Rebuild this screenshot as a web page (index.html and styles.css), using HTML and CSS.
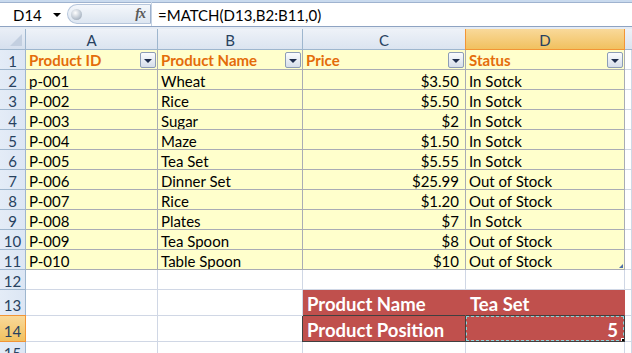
FILE: index.html
```html
<!DOCTYPE html>
<html>
<head>
<meta charset="utf-8">
<link rel="stylesheet" href="styles.css">
</head>
<body>
<div class="app">
  <div class="fbar">
    <div class="namebox"><span class="nb-text">D14</span><span class="nb-arrow"></span></div>
    <div class="slider"><span class="knob"></span><span class="fx">fx</span></div>
    <div class="formula">=MATCH(D13,B2:B11,0)</div>
  </div>
  <div class="gap"></div>
  <div class="sheet">
    <!-- header row -->
    <div class="corner"><span class="corner-tri"></span></div>
    <div class="ch">A</div><div class="ch">B</div><div class="ch">C</div><div class="ch ch-sel">D</div><div class="ch ch-e"></div>

    <div class="rh">1</div>
    <div class="c t th"><span>Product ID</span><span class="flt"></span></div>
    <div class="c t th"><span>Product Name</span><span class="flt"></span></div>
    <div class="c t th"><span>Price</span><span class="flt"></span></div>
    <div class="c t th"><span>Status</span><span class="flt"></span></div>
    <div class="c e"></div>

    <div class="rh">2</div><div class="c t">p-001</div><div class="c t">Wheat</div><div class="c t n">$3.50</div><div class="c t">In Sotck</div><div class="c e"></div>
    <div class="rh">3</div><div class="c t">P-002</div><div class="c t">Rice</div><div class="c t n">$5.50</div><div class="c t">In Sotck</div><div class="c e"></div>
    <div class="rh">4</div><div class="c t">P-003</div><div class="c t">Sugar</div><div class="c t n">$2</div><div class="c t">In Sotck</div><div class="c e"></div>
    <div class="rh">5</div><div class="c t">P-004</div><div class="c t">Maze</div><div class="c t n">$1.50</div><div class="c t">In Sotck</div><div class="c e"></div>
    <div class="rh">6</div><div class="c t">P-005</div><div class="c t">Tea Set</div><div class="c t n">$5.55</div><div class="c t">In Sotck</div><div class="c e"></div>
    <div class="rh">7</div><div class="c t">P-006</div><div class="c t">Dinner Set</div><div class="c t n">$25.99</div><div class="c t">Out of Stock</div><div class="c e"></div>
    <div class="rh">8</div><div class="c t">P-007</div><div class="c t">Rice</div><div class="c t n">$1.20</div><div class="c t">Out of Stock</div><div class="c e"></div>
    <div class="rh">9</div><div class="c t">P-008</div><div class="c t">Plates</div><div class="c t n">$7</div><div class="c t">In Sotck</div><div class="c e"></div>
    <div class="rh">10</div><div class="c t">P-009</div><div class="c t">Tea Spoon</div><div class="c t n">$8</div><div class="c t">Out of Stock</div><div class="c e"></div>
    <div class="rh">11</div><div class="c t">P-010</div><div class="c t">Table Spoon</div><div class="c t n">$10</div><div class="c t last">Out of Stock<span class="resize"></span></div><div class="c e"></div>

    <div class="rh">12</div><div class="c e"></div><div class="c e"></div><div class="c e"></div><div class="c e"></div><div class="c e"></div>

    <div class="rh tall">13</div><div class="c e tall"></div><div class="c e tall"></div>
    <div class="c red tall r13c">Product Name</div><div class="c red tall r13d">Tea Set</div><div class="c e tall"></div>

    <div class="rh tall rh-sel">14</div><div class="c e tall"></div><div class="c e tall"></div>
    <div class="c red tall r14c">Product Position</div><div class="c red tall r14d n"><span class="marq"></span>5<span class="handle"></span></div><div class="c e tall"></div>

    <div class="rh">15</div><div class="c e"></div><div class="c e"></div><div class="c e"></div><div class="c e"></div><div class="c e"></div>
  </div>
</div>
</body>
</html>
```

FILE: styles.css
```css
* { box-sizing: border-box; }
html, body { margin: 0; padding: 0; }
body {
  width: 632px;
  height: 353px;
  overflow: hidden;
  background: #ffffff;
  font-family: Lato, "Open Sans", sans-serif;
  font-size: 15px;
  color: #000;
}
.app { display: flex; flex-direction: column; }

/* formula bar */
.fbar {
  display: flex;
  height: 27px;
  border-top: 2px solid #c9daee;
  border-bottom: 1px solid #8ea3c2;
  background: #fff;
  box-shadow: inset 0 1px 0 #9fb3cf;
}
.namebox {
  width: 66px;
  display: flex;
  align-items: center;
  justify-content: space-between;
  padding: 2px 5px 0 13px;
}
.nb-text { font-family: Lato, sans-serif; font-size: 15px; color: #000; }
.nb-arrow {
  width: 0; height: 0;
  border-left: 4px solid transparent;
  border-right: 4px solid transparent;
  border-top: 4px solid #000;
}
.slider {
  width: 84px;
  margin: 2px 0 2px 1px;
  border-radius: 11px 0 0 11px;
  background: linear-gradient(#f4f7fb, #dde6f1);
  border: 1px solid #b6c6dc;
  border-right: 1px solid #9db1cd;
  display: flex;
  align-items: center;
  justify-content: space-between;
  padding: 0 3px 0 3px;
}
.knob {
  width: 11px; height: 11px;
  border-radius: 50%;
  background: radial-gradient(circle at 40% 35%, #ffffff, #b9c3cf 60%, #8f9aa8);
}
.fx {
  font-family: "Liberation Serif", serif;
  font-style: italic;
  font-weight: bold;
  font-size: 14px;
  color: #5a5a5a;
  letter-spacing: -1px;
  padding-right: 2px;
}
.formula {
  flex: 1;
  display: flex;
  align-items: center;
  padding: 2px 0 0 6px;
  font-size: 15px;
  border-left: 1px solid #c5d2e3;
}
.gap { height: 2px; background: #e6ecf4; }

/* sheet grid */
.sheet {
  display: grid;
  grid-template-columns: 26px 132px 145px 163px 159px 7px;
  grid-template-rows: 21px repeat(12, 20px) 26px 26px 20px;
}
.corner {
  background: linear-gradient(#e9eef6, #d6e0ee);
  border-right: 1px solid #9eb6ce;
  border-bottom: 1px solid #9eb6ce;
  position: relative;
}
.corner-tri {
  position: absolute;
  right: 3px; bottom: 3px;
  width: 0; height: 0;
  border-left: 12px solid transparent;
  border-bottom: 12px solid #c3cfe0;
}
.ch {
  background: linear-gradient(#eef2f8, #dbe4f0);
  border-right: 1px solid #9eb6ce;
  border-bottom: 1px solid #9eb6ce;
  display: flex;
  align-items: center;
  justify-content: center;
  padding-top: 2px;
  color: #27415f;
  font-size: 15px;
}
.ch-sel {
  background: linear-gradient(#f9d99a, #f1c15f);
  border-right: 1px solid #f29536;
  border-bottom: 1px solid #f29536;
  border-left: 1px solid #f29536;
  margin-left: -1px;
}
.ch-e { border-right: none; }
.rh {
  background: linear-gradient(90deg, #e4ecf7, #dce6f4);
  border-right: 1px solid #9eb6ce;
  border-bottom: 1px solid #9eb6ce;
  display: flex;
  align-items: flex-end;
  justify-content: center;
  padding-bottom: 0;
  color: #27415f;
  font-size: 15px;
  line-height: 15px;
}
.rh.tall { padding-bottom: 1px; line-height: 18px; }
.rh-sel {
  background: linear-gradient(#f9d99a, #f1c15f);
  border: 1px solid #f29536;
  border-left: none;
  margin-top: -1px;
}
.c {
  border-right: 1px solid #d0d7e5;
  border-bottom: 1px solid #d0d7e5;
  display: flex;
  align-items: flex-end;
  padding: 0 3px 0 3px;
  line-height: 15px;
  white-space: nowrap;
  overflow: hidden;
}
.c.t {
  background: #ffffcc;
  border-right-color: #a9acb4;
  border-bottom-color: #a9acb4;
}
.c.n { justify-content: flex-end; padding-right: 6px; }
.th {
  justify-content: space-between;
  align-items: center;
  padding: 1px 1px 0 3px;
  color: #e46c0a;
  font-weight: bold;
}
.flt {
  width: 16px; height: 16px;
  border: 1px solid #8d9db6;
  border-radius: 2px;
  background: linear-gradient(#fbfcfe, #d6deea);
  display: flex;
  align-items: center;
  justify-content: center;
}
.flt::after {
  content: "";
  width: 0; height: 0;
  border-left: 4px solid transparent;
  border-right: 4px solid transparent;
  border-top: 4px solid #1d2c4c;
  margin-top: 1px;
}
.last { position: relative; }
.resize {
  position: absolute;
  right: 1px; bottom: 1px;
  width: 0; height: 0;
  border-left: 4px solid transparent;
  border-bottom: 4px solid #4f6fa8;
}
.c.e { background: #fff; }
.c.tall { padding-bottom: 1px; }

.c.red {
  background: #c0504d;
  color: #fff;
  font-weight: bold;
  font-size: 18.5px;
  line-height: 20px;
  padding-left: 4px;
}
.r13c { border-right-color: #c0504d; border-bottom-color: #404040; padding-bottom: 0; }
.r13d { border-right-color: #c0504d; border-bottom-color: #404040; padding-bottom: 0; }
.r14c {
  border-left: 1px solid #404040;
  border-right-color: #404040;
  border-bottom-color: #404040;
  margin-left: -1px;
  padding-bottom: 0;
  line-height: 18px;
}
.r14d {
  border-right-color: #404040;
  border-bottom-color: #404040;
  position: relative;
  padding-right: 6px;
  padding-bottom: 0;
  line-height: 18px;
}
.marq {
  position: absolute;
  left: 0; top: 0; right: 0; bottom: 0;
  border: 1px dashed #8fd3d8;
}
.handle {
  position: absolute;
  right: -2px; bottom: -2px;
  width: 5px; height: 5px;
  background: #000;
  border: 1px solid #fff;
}
```
